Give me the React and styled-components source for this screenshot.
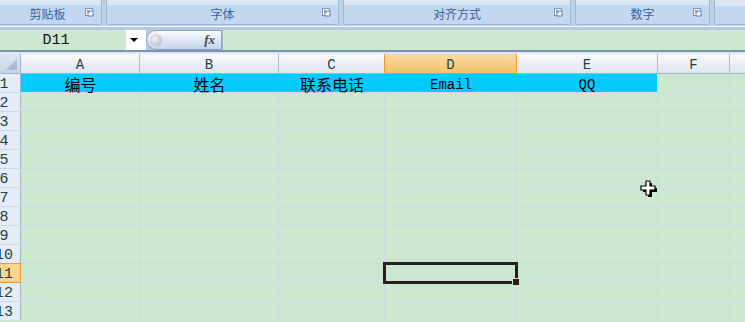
import React from "react";
import styled, { createGlobalStyle } from "styled-components";

const GlobalStyle = createGlobalStyle`
  html, body {
    margin: 0;
    padding: 0;
    overflow: hidden;
    background: #cce8cf;
  }
  body {
    font-family: "Liberation Sans", "Noto Sans CJK SC", sans-serif;
  }
`;

const COLS = [
  { key: "A", width: 118 },
  { key: "B", width: 138 },
  { key: "C", width: 105 },
  { key: "D", width: 131, active: true },
  { key: "E", width: 140 },
  { key: "F", width: 71 },
  { key: "G", width: 60 },
];

const HEADER_ROW = ["编号", "姓名", "联系电话", "Email", "QQ"];
const ROW_COUNT = 13;
const ACTIVE_ROW = 11;

const GROUPS = [
  { label: "剪贴板", width: 109, offset: -7 },
  { label: "字体", width: 233 },
  { label: "对齐方式", width: 228 },
  { label: "数字", width: 135 },
  { label: "", width: 80 },
];

const Page = styled.div`
  width: 745px;
  height: 322px;
  overflow: hidden;
  display: flex;
  flex-direction: column;
  background: #cce8cf;
`;

/* ---------- ribbon ---------- */

const Ribbon = styled.div`
  height: 26px;
  display: flex;
  gap: 4px;
  background: #bcd0e8;
  flex-shrink: 0;
`;

const Group = styled.div`
  flex-shrink: 0;
  height: 25px;
  display: flex;
  flex-direction: column;
  border: 1px solid #9fb8d6;
  border-top: none;
  border-radius: 0 0 3px 3px;
  box-shadow: inset 1px 0 0 #e6eef8, inset -1px 0 0 #e6eef8,
    inset 0 -1px 0 #e6eef8;
  box-sizing: border-box;
  overflow: hidden;
`;

const GroupBody = styled.div`
  height: 6px;
  background: #dbe6f4;
`;

const GroupLabel = styled.div`
  flex: 1;
  display: flex;
  align-items: center;
  background: #c3d8f0;
  padding-right: 4px;
  padding-bottom: 2px;
`;

const LabelText = styled.span`
  flex: 1;
  text-align: center;
  font-size: 12px;
  color: #3d5f9b;
  padding-left: 16px;
`;

const Launcher = styled.svg`
  width: 9px;
  height: 9px;
  flex-shrink: 0;
  margin-right: 3px;
  margin-bottom: 3px;
`;

/* ---------- formula bar ---------- */

const FormulaBar = styled.div`
  flex-shrink: 0;
  height: 20px;
  padding-top: 4px;
  background: linear-gradient(#f4f8fc 0 1px, #b6c9e0 1px);
  border-bottom: 2px solid #7893b6;
  display: flex;
  align-items: stretch;
  box-shadow: 0 2px 0 #dde7f3;
  margin-bottom: 2px;
  box-sizing: content-box;
`;

const NameBox = styled.div`
  width: 126px;
  background: #cce8cf;
  display: flex;
  align-items: center;
  justify-content: center;
  padding-right: 14px;
  padding-top: 1px;
  box-sizing: border-box;
  font-family: "Liberation Mono", monospace;
  font-size: 15px;
  color: #111;
`;

const DropButton = styled.div`
  width: 20px;
  background: #ffffff;
  display: flex;
  align-items: center;
  justify-content: center;
  &::after {
    content: "";
    border-left: 4px solid transparent;
    border-right: 4px solid transparent;
    border-top: 4px solid #000;
    margin-left: -4px;
  }
`;

const FxPill = styled.div`
  width: 76px;
  background: linear-gradient(#fbfcfe, #dbe4f1 55%, #c5d3e7);
  border: 1px solid #8ea5c4;
  border-radius: 10px 2px 2px 10px;
  box-sizing: border-box;
  display: flex;
  align-items: center;
  justify-content: space-between;
  padding: 0 6px 0 3px;
`;

const Knob = styled.span`
  width: 12px;
  height: 12px;
  border-radius: 50%;
  background: radial-gradient(circle at 40% 40%, #f4f4f4, #a9b0ba);
`;

const Fx = styled.span`
  font-family: "Liberation Serif", serif;
  font-style: italic;
  font-weight: bold;
  font-size: 13px;
  color: #4a4a4a;
`;

const FormulaInput = styled.div`
  flex: 1;
  background: #cce8cf;
  border-left: 1px solid #9fb4cf;
`;

/* ---------- sheet ---------- */

const SheetWrap = styled.div`
  position: relative;
  flex: 1;
`;

const Grid = styled.div`
  display: grid;
  grid-template-columns: 20px ${COLS.map((c) => `${c.width}px`).join(" ")};
  grid-template-rows: 19px repeat(${ROW_COUNT}, 18px);
  gap: 1px;
  background: #d0d7e5;
`;

const Corner = styled.div`
  background: linear-gradient(#dde7f3, #c8d6e8);
  border-right: 1px solid #9eb6ce;
  border-bottom: 1px solid #9eb6ce;
  margin: 0 -1px -1px 0;
  position: relative;
  &::after {
    content: "";
    position: absolute;
    right: 3px;
    bottom: 3px;
    border-left: 11px solid transparent;
    border-bottom: 11px solid #a9bbd3;
  }
`;

const ColHeader = styled.div`
  display: flex;
  align-items: center;
  justify-content: center;
  font-family: "Liberation Mono", monospace;
  font-size: 14px;
  line-height: 14px;
  color: #24403e;
  background: ${(p) =>
    p.$active
      ? "linear-gradient(#f9dba6, #f2c368)"
      : "linear-gradient(#f8fafd, #dfe5ef)"};
  border-right: 1px solid ${(p) => (p.$active ? "#f29536" : "#a9bdd4")};
  border-bottom: 1px solid ${(p) => (p.$active ? "#f29536" : "#9eb6ce")};
  border-left: ${(p) => (p.$active ? "1px solid #f29536" : "none")};
  margin: 0 -1px -1px ${(p) => (p.$active ? "-1px" : "0")};
  padding-top: 2px;
  box-sizing: border-box;
`;

const RowHeader = styled.div`
  display: flex;
  align-items: center;
  justify-content: flex-start;
  overflow: hidden;
  font-family: "Liberation Mono", monospace;
  font-size: 15px;
  color: #24403e;
  background: ${(p) => (p.$active ? "#ffd58d" : "#e4ecf7")};
  border-right: 1px solid ${(p) => (p.$active ? "#f29536" : "#9eb6ce")};
  border-top: ${(p) => (p.$active ? "1px solid #f29536" : "none")};
  border-bottom: ${(p) => (p.$active ? "1px solid #f29536" : "none")};
  margin: ${(p) => (p.$active ? "-1px -1px -1px 0" : "0 -1px 0 0")};
  padding-top: 2px;
  box-sizing: border-box;
  white-space: nowrap;
  & > span {
    display: inline-block;
    flex-shrink: 0;
    width: 30px;
    text-align: center;
    margin-left: -11px;
  }
`;

const Cell = styled.div`
  display: flex;
  align-items: center;
  justify-content: center;
  background: ${(p) => (p.$filled ? "#00ccff" : "#cce8cf")};
  margin-right: ${(p) => (p.$bleed ? "-1px" : "0")};
  font-family: ${(p) =>
    p.$latin
      ? `"Liberation Mono", monospace`
      : `"Noto Sans CJK SC", sans-serif`};
  font-size: ${(p) => (p.$latin ? "14px" : "16px")};
  line-height: 16px;
  padding-top: ${(p) => (p.$latin ? "3px" : "1px")};
  box-sizing: border-box;
  color: #000;
  white-space: nowrap;
`;

const Selection = styled.div`
  position: absolute;
  left: 383px;
  top: 208px;
  width: 135px;
  height: 22px;
  border: 3px solid #2b1c21;
  box-sizing: border-box;
  pointer-events: none;
  &::after {
    content: "";
    position: absolute;
    right: -4px;
    bottom: -4px;
    width: 6px;
    height: 6px;
    background: #2b1c21;
    border-left: 1px solid #cce8cf;
    border-top: 1px solid #cce8cf;
  }
`;

const Cursor = styled.svg`
  position: absolute;
  left: 640px;
  top: 126px;
  width: 18px;
  height: 18px;
`;

const LauncherIcon = () => (
  <Launcher viewBox="0 0 9 9">
    <rect x="0.5" y="0.5" width="7" height="7" fill="#f4f8fc" stroke="#7f96b8" />
    <rect x="3" y="3" width="5" height="5" fill="#ffffff" stroke="#5d7aa6" />
    <path d="M2 2 L5 5" stroke="#5d7aa6" />
  </Launcher>
);

const App = () => {
  const rows = [];
  for (let r = 1; r <= ROW_COUNT; r++) {
    rows.push(
      <RowHeader key={`h${r}`} $active={r === ACTIVE_ROW}>
        <span>{r}</span>
      </RowHeader>
    );
    COLS.forEach((c, i) => {
      const filled = r === 1 && i < HEADER_ROW.length;
      const text = filled ? HEADER_ROW[i] : "";
      rows.push(
        <Cell
          key={`${c.key}${r}`}
          $filled={filled}
          $bleed={filled && i < HEADER_ROW.length - 1}
          $latin={/^[A-Za-z]/.test(text)}
        >
          {text}
        </Cell>
      );
    });
  }

  return (
    <>
      <GlobalStyle />
      <Page>
        <Ribbon>
          {GROUPS.map((g, i) => (
            <Group
              key={i}
              style={{ width: g.width, marginLeft: g.offset || 0 }}
            >
              <GroupBody />
              <GroupLabel>
                <LabelText>{g.label}</LabelText>
                {g.label && <LauncherIcon />}
              </GroupLabel>
            </Group>
          ))}
        </Ribbon>

        <FormulaBar>
          <NameBox>D11</NameBox>
          <DropButton />
          <FxPill>
            <Knob />
            <Fx>fx</Fx>
          </FxPill>
          <FormulaInput />
        </FormulaBar>

        <SheetWrap>
          <Grid>
            <Corner />
            {COLS.map((c) => (
              <ColHeader key={c.key} $active={c.active}>
                {c.key === "G" ? "" : c.key}
              </ColHeader>
            ))}
            {rows}
          </Grid>
          <Selection />
          <Cursor viewBox="0 0 18 18">
            <path
              d="M7 2 H11 V7 H16 V11 H11 V16 H7 V11 H2 V7 H7 Z"
              fill="#000"
              transform="translate(1 1)"
            />
            <path
              d="M6 1 H10 V6 H15 V10 H10 V15 H6 V10 H1 V6 H6 Z"
              fill="#fff"
              stroke="#000"
              strokeWidth="1.2"
            />
          </Cursor>
        </SheetWrap>
      </Page>
    </>
  );
};

export default App;
